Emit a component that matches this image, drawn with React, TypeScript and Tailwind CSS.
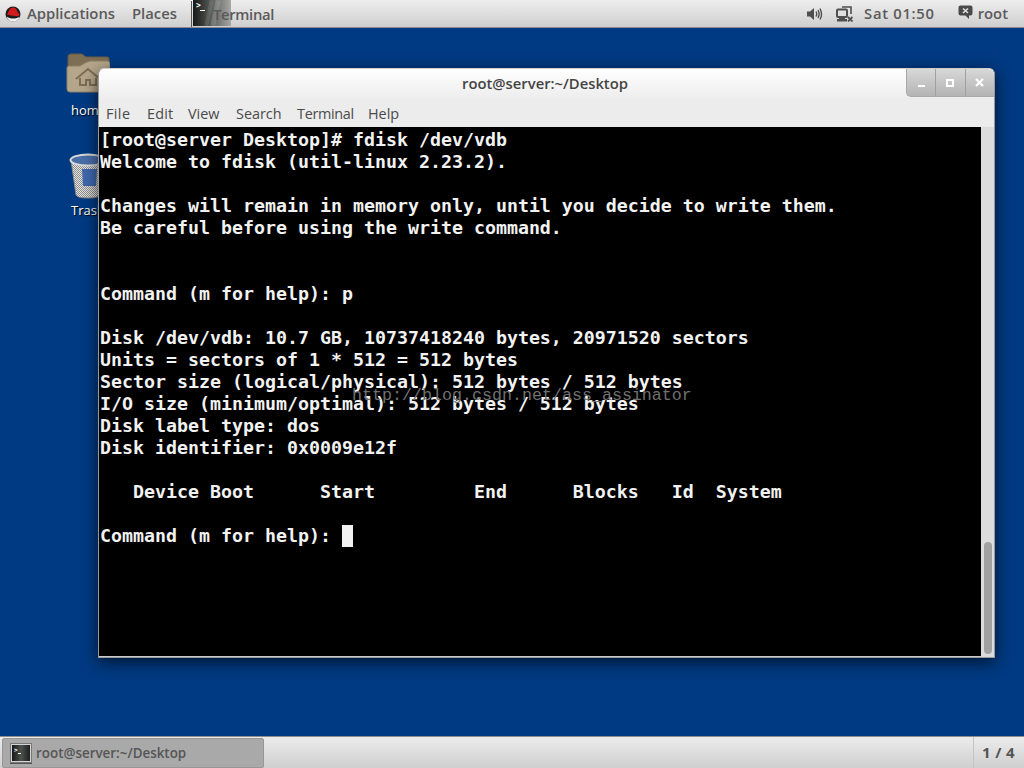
const lines = [
  '[root@server Desktop]# fdisk /dev/vdb',
  'Welcome to fdisk (util-linux 2.23.2).',
  '',
  'Changes will remain in memory only, until you decide to write them.',
  'Be careful before using the write command.',
  '',
  '',
  'Command (m for help): p',
  '',
  'Disk /dev/vdb: 10.7 GB, 10737418240 bytes, 20971520 sectors',
  'Units = sectors of 1 * 512 = 512 bytes',
  'Sector size (logical/physical): 512 bytes / 512 bytes',
  'I/O size (minimum/optimal): 512 bytes / 512 bytes',
  'Disk label type: dos',
  'Disk identifier: 0x0009e12f',
  '',
  '   Device Boot      Start         End      Blocks   Id  System',
  '',
];

const menus = [
  { label: 'File', cls: 'w-[41px] tracking-[0.4px]' },
  { label: 'Edit', cls: 'w-[41px] tracking-[0.2px]' },
  { label: 'View', cls: 'w-[48px]' },
  { label: 'Search', cls: 'w-[61px]' },
  { label: 'Terminal', cls: 'w-[71px] tracking-[-0.3px]' },
  { label: 'Help', cls: 'w-[40px]' },
];

function RedHatLogo() {
  return (
    <svg width="16" height="16" viewBox="0 0 16 16">
      <circle cx="8" cy="8" r="7.5" fill="#1c1c1c" />
      <path d="M1.5 10.5 C4 13 12 13.5 14.5 10.5 C14 14 11 15.5 8 15.5 C5 15.5 2.5 14 1.5 10.5Z" fill="#f2f2f2" />
      <path d="M2 8.5 L4 4.5 C5 2 7.5 1 10 2 C11.5 3 12 4.5 12.5 6 L14.5 8 C14.5 10 13 10.5 11 10 C8 9.5 4 9.5 2 8.5Z" fill="#d01c1f" />
    </svg>
  );
}

function TerminalThumb({ small }: { small?: boolean }) {
  if (small) {
    return (
      <div className="w-[22px] h-[20px] bg-[#d4d4d4] border border-[#777] p-[1px] shadow-[0_1px_0_#555]">
        <div className="relative w-full h-full bg-gradient-to-r from-[#151a18] via-[#4d524f] to-[#1c211f] overflow-hidden">
          <span className="absolute left-[2px] top-[1px] text-[6px] leading-[7px] text-white font-['DejaVu_Sans_Mono',monospace]">{'>'}</span>
          <div className="absolute left-[6px] top-[8px] w-[3px] h-[1px] bg-white" />
        </div>
      </div>
    );
  }
  return (
    <div className="relative w-[38px] h-[26px] overflow-hidden bg-gradient-to-r from-[#161a18] via-[#5b5f5c] to-[#a9a9a7]">
      <span className="absolute left-[3px] top-[1px] text-[8px] leading-[9px] text-white font-['DejaVu_Sans_Mono',monospace]">{'>'}</span>
      <div className="absolute left-[7px] top-[10px] w-[5px] h-[1px] bg-white" />
      <div className="absolute left-[14px] top-0 w-[4px] h-[26px] rotate-12 bg-white/10" />
      <div className="absolute left-[20px] top-0 w-[5px] h-[26px] rotate-12 bg-white/15" />
    </div>
  );
}

function FolderIcon() {
  return (
    <svg width="44" height="42" viewBox="0 0 44 42">
      <path d="M2 4 Q2 1 5 1 L16 1 L20 4 L41 4 Q43 4 43 6 L43 22 L2 22Z" fill="#7d6e55" stroke="#6a5c46" />
      <path d="M1 15 Q1 13 3 13 L14 13 Q20 9 24 8 L41 8 Q44 8 44 11 L44 36 Q44 39 41 39 L4 39 Q1 39 1 36Z" fill="#b5a68b" stroke="#8f8067" />
      <path d="M10 26 L22 16 L34 26 M14 25 L14 32 L20 32 L20 27 L24 27 L24 32 L30 32 L30 25" fill="none" stroke="#7d6e55" strokeWidth="2" />
    </svg>
  );
}

function TrashIcon() {
  return (
    <svg width="38" height="46" viewBox="0 0 38 46">
      <defs>
        <pattern id="mesh" width="2" height="2" patternUnits="userSpaceOnUse">
          <rect width="2" height="2" fill="#e4e4e4" />
          <rect width="1" height="1" fill="#8e8e8e" />
          <rect x="1" y="1" width="1" height="1" fill="#8e8e8e" />
        </pattern>
      </defs>
      <path d="M2 7 L7 42 Q8 45 19 45 Q30 45 31 42 L36 7Z" fill="url(#mesh)" stroke="#8a8a8a" />
      <path d="M13 16 L28 16 L27 33 L14 33Z" fill="#3f68ad" />
      <ellipse cx="19" cy="7" rx="17.5" ry="5.5" fill="#4a6ea8" stroke="#d8d8d8" strokeWidth="2" />
    </svg>
  );
}

function SpeakerIcon() {
  return (
    <svg width="16" height="14" viewBox="0 0 16 14" fill="none" stroke="#4f4f4f">
      <path d="M0 4.5 H3 L7 1 V13 L3 9.5 H0Z" fill="#4f4f4f" stroke="none" />
      <path d="M9 4.5 Q10.5 7 9 9.5 M11 3 Q13.2 7 11 11 M13 1.5 Q16 7 13 12.5" strokeWidth="1.4" />
    </svg>
  );
}

function NetworkIcon() {
  return (
    <svg width="17" height="16" viewBox="0 0 17 16" fill="none" stroke="#4f4f4f">
      <rect x="1" y="3.5" width="10" height="7.5" rx="1" strokeWidth="2" />
      <path d="M3 12 H9 V13 H11 V15.5 H1 V13 H3Z" fill="#4f4f4f" stroke="none" />
      <path d="M6 1 H15 V8" strokeWidth="1.6" />
      <path d="M12 11 L16.5 15.5 M16.5 11 L12 15.5" strokeWidth="1.8" />
    </svg>
  );
}

function ChatIcon() {
  return (
    <svg width="15" height="15" viewBox="0 0 15 15">
      <path d="M2.5 0.5 H12.5 Q14.5 0.5 14.5 2.5 V8.5 Q14.5 10.5 12.5 10.5 H11 V14 L7.5 10.5 H2.5 Q0.5 10.5 0.5 8.5 V2.5 Q0.5 0.5 2.5 0.5Z" fill="#4a4a4a" />
      <path d="M5 3.5 L10 8 M10 3.5 L5 8" stroke="#e0e0e0" strokeWidth="1.6" />
    </svg>
  );
}

export default function App() {
  return (
    <div className="w-[1024px] h-[768px] overflow-hidden flex flex-col font-['Open_Sans','Noto_Sans',sans-serif] bg-[#003a82]">
      {/* top panel */}
      <div className="h-[28px] shrink-0 flex items-center bg-gradient-to-b from-[#eeeeee] to-[#cfcfcf] border-b border-[#8a8a8a] text-[14.8px] text-[#5a5a5a] font-semibold">
        <div className="ml-[5px] mr-[6px]"><RedHatLogo /></div>
        <span>Applications</span>
        <span className="ml-[17px]">Places</span>
        <div className="ml-[14px] w-px h-[26px] bg-[#555]" />
        <div className="relative ml-[1px] h-[26px] w-[90px] self-start">
          <TerminalThumb />
          <span className="absolute left-[20px] top-[3px] tracking-[-0.3px]">Terminal</span>
        </div>
        <div className="ml-auto flex items-center">
          <SpeakerIcon />
          <div className="ml-[13px]"><NetworkIcon /></div>
          <span className="ml-[11px] tracking-[0.7px]">Sat 01:50</span>
          <div className="ml-[23px] -mt-[3px]"><ChatIcon /></div>
          <span className="ml-[5px] mr-[16px]">root</span>
        </div>
      </div>

      {/* desktop */}
      <div className="relative flex-1 bg-[#003a82]">
        <div className="absolute left-[66px] top-[25px]"><FolderIcon /></div>
        <span className="absolute left-[71px] top-[73px] text-[13px] text-white [text-shadow:1px_1px_1px_#000]">home</span>
        <div className="absolute left-[69px] top-[125px]"><TrashIcon /></div>
        <span className="absolute left-[71px] top-[173px] text-[13px] text-white [text-shadow:1px_1px_1px_#000]">Trash</span>

        {/* terminal window */}
        <div className="absolute left-[98px] top-[40px] w-[897px] h-[590px] flex flex-col rounded-t-[6px] bg-[#ececec] border border-[#9a9a9a] border-t-[#cfcfcf] shadow-[0_4px_16px_rgba(0,0,0,0.65)]">
          <div className="relative h-[31px] shrink-0 flex items-center justify-center rounded-t-[6px] bg-gradient-to-b from-white to-[#ececec] text-[14.8px] font-semibold text-[#444]">
            <span className="-mt-[2px] -ml-[3px]">root@server:~/Desktop</span>
            <div className="absolute right-0 top-0 h-[28px] w-[88px] flex rounded-bl-[5px] rounded-tr-[6px] bg-gradient-to-b from-[#d8d8d8] to-[#b4b4b4] border-l border-b border-[#a8a8a8]">
              <div className="flex-1 flex items-end justify-center pb-[9px] border-r border-[#a0a0a0]">
                <div className="w-[7px] h-[2px] bg-white" />
              </div>
              <div className="flex-1 flex items-center justify-center border-r border-[#a0a0a0]">
                <div className="w-[8px] h-[8px] border-2 border-white" />
              </div>
              <div className="flex-1 flex items-center justify-center">
                <svg width="9" height="9" viewBox="0 0 9 9" stroke="#fff" strokeWidth="2.2"><path d="M1 1 L8 8 M8 1 L1 8" /></svg>
              </div>
            </div>
          </div>
          <div className="h-[27px] shrink-0 flex items-center pl-[7px] text-[14.4px] text-[#4a4a4a]">
            {menus.map(m => <span key={m.label} className={m.cls}>{m.label}</span>)}
          </div>
          <div className="flex-1 flex min-h-0">
            <div className="relative w-[882px] pt-[2px] bg-black border-b border-[#ccc] overflow-hidden">
              <div className="pl-px font-['DejaVu_Sans_Mono',monospace] font-bold text-[18.27px] leading-[22px] text-[#f2f2f2] whitespace-pre">
                {lines.map((l, i) => <div key={i} className="h-[22px]">{l}</div>)}
                <div className="h-[22px] flex">
                  <span>Command (m for help): </span>
                  <span className="w-[11px] h-[22px] bg-[#f2f2f2]" />
                </div>
              </div>
              <span className="absolute left-[253px] top-[259px] font-['Liberation_Mono',monospace] text-[16.67px] leading-[20px] text-[#707070] whitespace-pre">http://blog.csdn.net/ass_assinator</span>
            </div>
            <div className="flex-1 relative bg-[#dcdcdc]">
              <div className="absolute left-[3px] right-[2px] top-[415px] bottom-[3px] rounded-full bg-[#a1a1a1]" />
            </div>
          </div>
        </div>
      </div>

      {/* bottom panel */}
      <div className="h-[32px] shrink-0 flex items-stretch bg-gradient-to-b from-[#ececec] to-[#cfcfcf] border-t border-[#8c8c8c] text-[13.4px] font-semibold text-[#555]">
        <div className="ml-[2px] mt-px w-[262px] flex items-center rounded-[2px] bg-[#a9a9a9] border border-[#969696] pl-[7px]">
          <TerminalThumb small />
          <span className="ml-[4px]">root@server:~/Desktop</span>
        </div>
        <div className="ml-auto w-[50px] flex items-center justify-center border-l border-[#c4c4c4] text-[15px] font-bold tracking-[0.4px] -translate-x-[1px]">1 / 4</div>
      </div>
    </div>
  );
}
